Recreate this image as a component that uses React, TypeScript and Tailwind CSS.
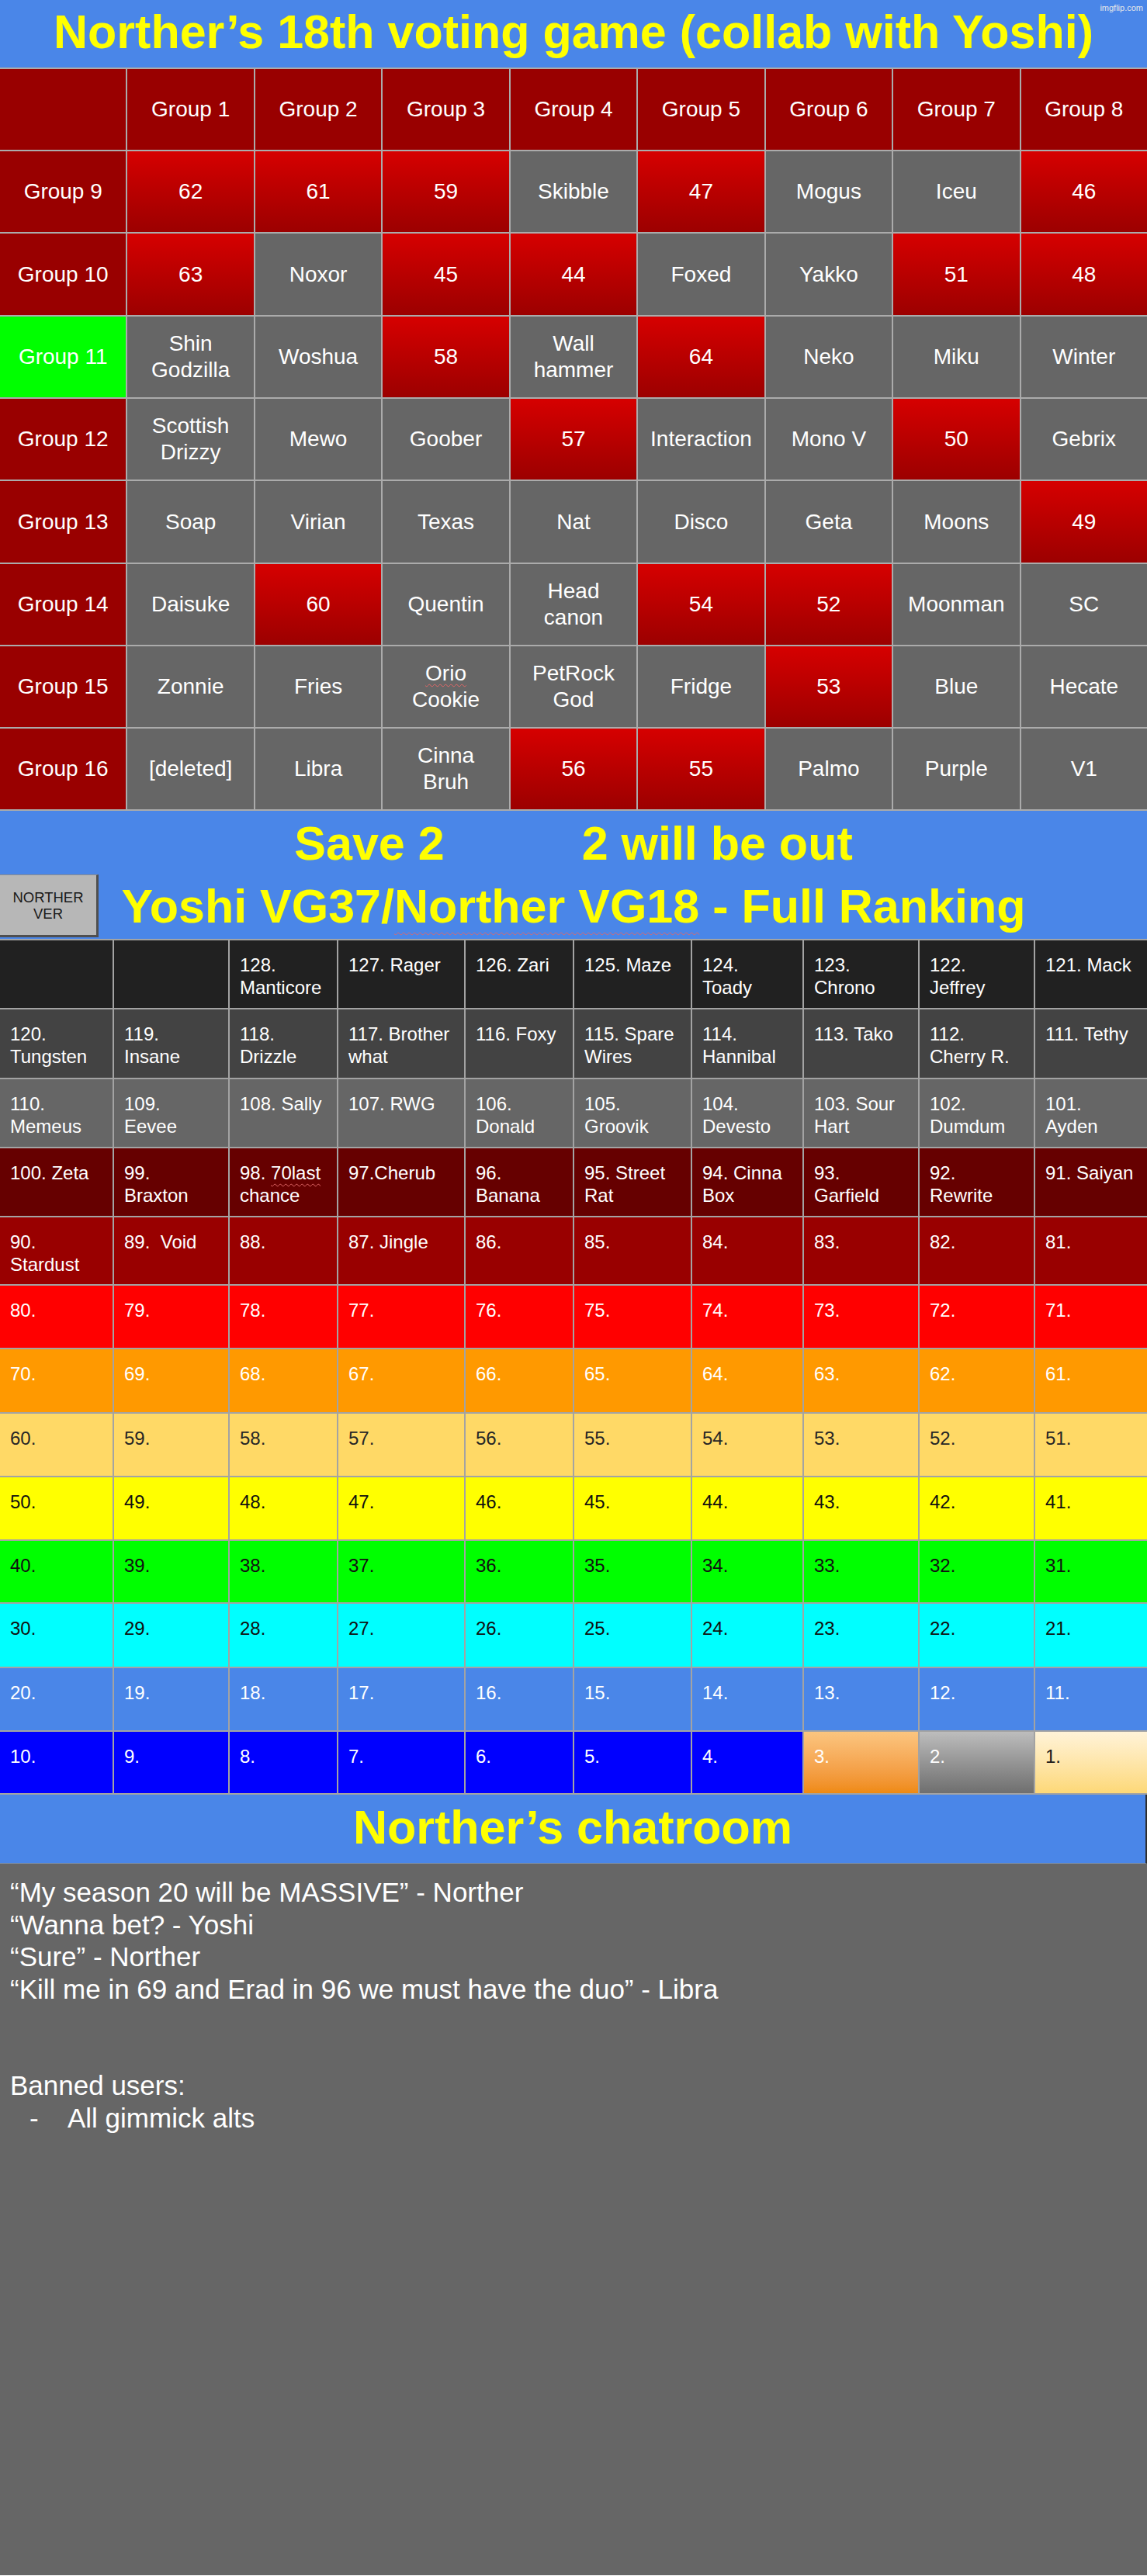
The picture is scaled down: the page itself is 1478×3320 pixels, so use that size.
import React from "react";
import clsx from "clsx";

// Top grid: numbers are red gradient cells, names are gray cells
const groupRows: { label: string; green?: boolean; h: string; cells: string[] }[] = [
  { label: "Group 9", h: "h-[104px]", cells: ["62", "61", "59", "Skibble", "47", "Mogus", "Iceu", "46"] },
  { label: "Group 10", h: "h-[105px]", cells: ["63", "Noxor", "45", "44", "Foxed", "Yakko", "51", "48"] },
  { label: "Group 11", green: true, h: "h-[104px]", cells: ["Shin\nGodzilla", "Woshua", "58", "Wall\nhammer", "64", "Neko", "Miku", "Winter"] },
  { label: "Group 12", h: "h-[104px]", cells: ["Scottish\nDrizzy", "Mewo", "Goober", "57", "Interaction", "Mono V", "50", "Gebrix"] },
  { label: "Group 13", h: "h-[105px]", cells: ["Soap", "Virian", "Texas", "Nat", "Disco", "Geta", "Moons", "49"] },
  { label: "Group 14", h: "h-[104px]", cells: ["Daisuke", "60", "Quentin", "Head\ncanon", "54", "52", "Moonman", "SC"] },
  { label: "Group 15", h: "h-[104px]", cells: ["Zonnie", "Fries", "ORIO", "PetRock\nGod", "Fridge", "53", "Blue", "Hecate"] },
  { label: "Group 16", h: "h-[104px]", cells: ["[deleted]", "Libra", "Cinna\nBruh", "56", "55", "Palmo", "Purple", "V1"] },
];

const squiggle = "underline decoration-wavy decoration-[#e06666] decoration-1";

const GroupCell: React.FC<{ value: string }> = ({ value }) => {
  const isNum = /^\d+$/.test(value);
  return (
    <div
      className={clsx(
        "flex items-center justify-center whitespace-pre-line text-center text-[28px] leading-[34px] text-white",
        isNum ? "bg-linear-to-b from-[#d60000] to-[#9c0000]" : "bg-[#666666]"
      )}
    >
      {value === "ORIO" ? (
        <span>
          <span className={clsx(squiggle, "underline-offset-[4px]")}>Orio</span>
          {"\nCookie"}
        </span>
      ) : (
        value
      )}
    </div>
  );
};

// Ranking table
const rankCols = "grid-cols-[145px_147px_138px_162px_138px_150px_142px_147px_147px_1fr]";

const countRow = (start: number) => Array.from({ length: 10 }, (_, i) => `${start - i}.`);

const rankRows: { bg: string; text: string; h: string; cells: string[] }[] = [
  {
    bg: "bg-[#212121]",
    text: "text-white",
    h: "h-[87px]",
    cells: ["", "", "128.\nManticore", "127. Rager", "126. Zari", "125. Maze", "124.\nToady", "123.\nChrono", "122.\nJeffrey", "121. Mack"],
  },
  {
    bg: "bg-[#434343]",
    text: "text-white",
    h: "h-[88px]",
    cells: ["120.\nTungsten", "119.\nInsane", "118.\nDrizzle", "117. Brother\nwhat", "116. Foxy", "115. Spare\nWires", "114.\nHannibal", "113. Tako", "112.\nCherry R.", "111. Tethy"],
  },
  {
    bg: "bg-[#666666]",
    text: "text-white",
    h: "h-[87px]",
    cells: ["110.\nMemeus", "109.\nEevee", "108. Sally", "107. RWG", "106.\nDonald", "105.\nGroovik", "104.\nDevesto", "103. Sour\nHart", "102.\nDumdum", "101.\nAyden"],
  },
  {
    bg: "bg-[#660000]",
    text: "text-white",
    h: "h-[87px]",
    cells: ["100. Zeta", "99.\nBraxton", "LAST", "97.Cherub", "96.\nBanana", "95. Street\nRat", "94. Cinna\nBox", "93.\nGarfield", "92.\nRewrite", "91. Saiyan"],
  },
  {
    bg: "bg-[#990000]",
    text: "text-white",
    h: "h-[86px]",
    cells: ["90.\nStardust", "89.  Void", "88.", "87. Jingle", "86.", "85.", "84.", "83.", "82.", "81."],
  },
  { bg: "bg-[#ff0000]", text: "text-white", h: "h-[80px]", cells: countRow(80) },
  { bg: "bg-[#ff9900]", text: "text-white", h: "h-[81px]", cells: countRow(70) },
  { bg: "bg-[#ffd966]", text: "text-[#262626]", h: "h-[80px]", cells: countRow(60) },
  { bg: "bg-[#ffff00]", text: "text-[#111111]", h: "h-[80px]", cells: countRow(50) },
  { bg: "bg-[#00ff00]", text: "text-[#111111]", h: "h-[79px]", cells: countRow(40) },
  { bg: "bg-[#00ffff]", text: "text-[#111111]", h: "h-[81px]", cells: countRow(30) },
  { bg: "bg-[#4a86e8]", text: "text-white", h: "h-[80px]", cells: countRow(20) },
  { bg: "bg-[#0000ff]", text: "text-white", h: "h-[79px]", cells: countRow(10) },
];

// podium cells in the last row
const podium: Record<string, string> = {
  "3.": "bg-linear-to-b from-[#fbc57f] to-[#ef8a10] text-white",
  "2.": "bg-linear-to-b from-[#bdbdbd] to-[#6f6f6f] text-white",
  "1.": "bg-linear-to-b from-[#fff3d8] to-[#fdd877] text-[#1a1a1a]",
};

const App: React.FC = () => {
  return (
    <div className="w-[1478px] font-['Liberation_Sans',Arial,sans-serif]">
      {/* Title */}
      <header className="relative h-[87px] bg-[#4a86e8] pt-[6px] text-center">
        <h1 className="text-[61px] font-bold leading-[70px] text-[#ffff00]">
          Norther’s 18th voting game (collab with Yoshi)
        </h1>
        <span className="absolute right-[5px] top-[3px] text-[11px] leading-[14px] text-[#e8e8e8]">imgflip.com</span>
      </header>

      {/* Groups grid */}
      <section className="flex flex-col gap-[2px] bg-[#ababab] py-[2px]">
        <div className="grid h-[104px] grid-cols-9 gap-x-[2px]">
          <div className="bg-[#990000]" />
          {Array.from({ length: 8 }, (_, i) => (
            <div key={i} className="flex items-center justify-center bg-[#990000] text-[28px] text-white">
              Group {i + 1}
            </div>
          ))}
        </div>
        {groupRows.map((row) => (
          <div key={row.label} className={clsx("grid grid-cols-9 gap-x-[2px]", row.h)}>
            <div
              className={clsx(
                "flex items-center justify-center text-[28px] text-white",
                row.green ? "bg-[#00ff00]" : "bg-[#990000]"
              )}
            >
              {row.label}
            </div>
            {row.cells.map((c, i) => (
              <GroupCell key={i} value={c} />
            ))}
          </div>
        ))}
      </section>

      {/* Save / ranking heading */}
      <section className="h-[165px] bg-[#4a86e8] pt-[7px]">
        <div className="flex justify-center text-[61px] font-bold leading-[70px] text-[#ffff00]">
          <span>Save 2</span>
          <span className="ml-[177px]">2 will be out</span>
        </div>
        <div className="mt-[5px] grid h-[81px] grid-cols-[127px_1fr_127px] items-center">
          <div className="flex h-full flex-col items-center justify-center border-b-[3px] border-r-[3px] border-t border-[#4f4f4f] border-t-[#8d8d8d] bg-[#b7b7b7] text-[18.5px] leading-[21px] text-[#1a1a1a]">
            <span>NORTHER</span>
            <span>VER</span>
          </div>
          <h2 className="whitespace-nowrap text-center text-[61px] font-bold leading-[70px] text-[#ffff00]">
            Yoshi VG37/
            <span className={clsx(squiggle, "underline-offset-[12px]")}>Norther VG18</span> - Full Ranking
          </h2>
          <div />
        </div>
      </section>

      {/* Full ranking */}
      <section className="flex flex-col gap-[2px] bg-[#a3a3a3] py-[2px]">
        {rankRows.map((row, r) => (
          <div key={r} className={clsx("grid gap-x-[2px]", rankCols, row.h)}>
            {row.cells.map((c, i) => (
              <div
                key={i}
                className={clsx(
                  "whitespace-pre-wrap pl-[13px] pr-[8px] pt-[17px] text-[24px] leading-[29px]",
                  r === rankRows.length - 1 && podium[c] ? podium[c] : clsx(row.bg, row.text)
                )}
              >
                {c === "LAST" ? (
                  <>
                    98. <span className={clsx(squiggle, "underline-offset-[5px]")}>70last</span>
                    {"\nchance"}
                  </>
                ) : (
                  c
                )}
              </div>
            ))}
          </div>
        ))}
      </section>

      {/* Chatroom */}
      <section className="flex h-[89px] items-center justify-center border-b border-r-2 border-b-[#7d8fa8] border-r-[#2e2e2e] bg-[#4a86e8] pb-[4px]">
        <h2 className="text-[61px] font-bold leading-[70px] text-[#ffff00]">Norther’s chatroom</h2>
      </section>
      <section className="h-[917px] bg-[#666666] pl-[13px] pt-[16px] text-[35px] leading-[41.5px] text-white">
        <p>“My season 20 will be MASSIVE” - Norther</p>
        <p>“Wanna bet? - Yoshi</p>
        <p>“Sure” - Norther</p>
        <p>“Kill me in 69 and Erad in 96 we must have the duo” - Libra</p>
        <p>&nbsp;</p>
        <p>&nbsp;</p>
        <p>Banned users:</p>
        <p className="flex">
          <span className="ml-[25px] w-[49px]">-</span>
          <span>All gimmick alts</span>
        </p>
      </section>
    </div>
  );
};

export default App;
